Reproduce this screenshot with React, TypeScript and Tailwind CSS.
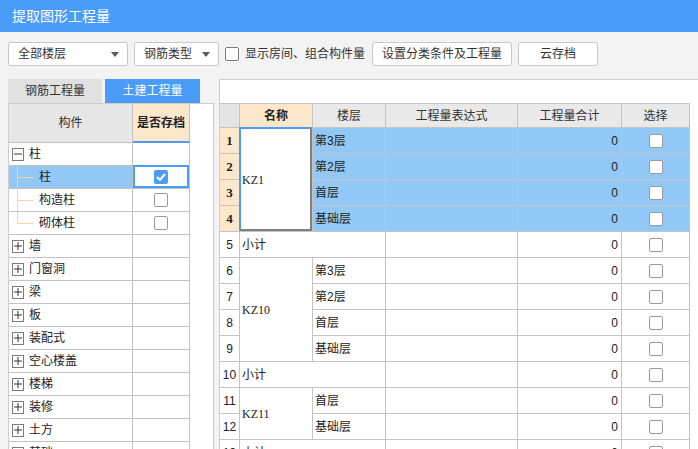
import React from 'react';

type TreeRow = {
  label: string;
  kind: 'parent' | 'child';
  open?: boolean;
  checked?: boolean;
  selected?: boolean;
  last?: boolean;
};

const treeRows: TreeRow[] = [
  { label: '柱', kind: 'parent', open: true },
  { label: '柱', kind: 'child', checked: true, selected: true },
  { label: '构造柱', kind: 'child' },
  { label: '砌体柱', kind: 'child', last: true },
  { label: '墙', kind: 'parent' },
  { label: '门窗洞', kind: 'parent' },
  { label: '梁', kind: 'parent' },
  { label: '板', kind: 'parent' },
  { label: '装配式', kind: 'parent' },
  { label: '空心楼盖', kind: 'parent' },
  { label: '楼梯', kind: 'parent' },
  { label: '装修', kind: 'parent' },
  { label: '土方', kind: 'parent' },
  { label: '基础', kind: 'parent' },
];

type Group = { name: string; floors: string[]; hot?: boolean };

const groups: Group[] = [
  { name: 'KZ1', floors: ['第3层', '第2层', '首层', '基础层'], hot: true },
  { name: 'KZ10', floors: ['第3层', '第2层', '首层', '基础层'] },
  { name: 'KZ11', floors: ['首层', '基础层'] },
];

const Caret = () => (
  <svg width="8" height="5" viewBox="0 0 8 5" className="shrink-0">
    <path d="M0 0 L8 0 L4 5 Z" fill="#5a5a5a" />
  </svg>
);

const Box = ({ checked }: { checked?: boolean }) =>
  checked ? (
    <div className="w-[14px] h-[14px] rounded-[2px] bg-[#4a9cf8] flex items-center justify-center">
      <svg width="10" height="8" viewBox="0 0 10 8">
        <path d="M1 4 L4 7 L9 1" stroke="#fff" strokeWidth="2" fill="none" />
      </svg>
    </div>
  ) : (
    <div className="w-[14px] h-[14px] rounded-[2px] border border-[#9a9a9a] bg-white" />
  );

const Expander = ({ open }: { open?: boolean }) => (
  <div className="ml-[3px] w-[12px] h-[13px] border border-[#7a7a7a] bg-white flex items-center justify-center shrink-0">
    <svg width="8" height="8" viewBox="0 0 8 8">
      <path d="M0 4 H8" stroke="#333" strokeWidth="1" />
      {!open && <path d="M4 0 V8" stroke="#333" strokeWidth="1" />}
    </svg>
  </div>
);

const TreeGrid = () => (
  <div className="grid grid-cols-[124px_57px] grid-rows-[39px] auto-rows-[23px] w-[181px] text-[12px] text-[#222]">
    <div className="bg-[#e6e6e6] border-r border-b border-[#c2c2c2] flex items-center justify-center text-[#333]">
      构件
    </div>
    <div className="bg-[#fde7cb] border-r border-b-2 border-r-[#c2c2c2] border-b-[#4a9cf8] flex items-center justify-center font-bold">
      是否存档
    </div>
    {treeRows.map((r, i) => (
      <React.Fragment key={i}>
        <div
          className={
            'border-r border-b border-[#c2c2c2] flex items-center ' +
            (r.selected ? 'bg-[#91c8f6]' : 'bg-white')
          }
        >
          {r.kind === 'parent' ? (
            <>
              <Expander open={r.open} />
              <span className="ml-[5px]">{r.label}</span>
            </>
          ) : (
            <>
              <svg width="24" height="22" viewBox="0 0 24 22" className="shrink-0 self-start">
                <path d={r.last ? 'M8.5 0 V11.5' : 'M8.5 0 V22'} stroke="#fcd29f" strokeWidth="1" />
                <path d="M8.5 11.5 H24" stroke="#fcd29f" strokeWidth="1" />
              </svg>
              <span className="ml-[6px]">{r.label}</span>
            </>
          )}
        </div>
        <div className="relative border-r border-b border-[#c2c2c2] bg-white flex items-center justify-center">
          {r.kind === 'child' && <Box checked={r.checked} />}
          {r.selected && (
            <div className="absolute -top-px left-0 right-0 bottom-0 border-2 border-[#4a9cf8]" />
          )}
        </div>
      </React.Fragment>
    ))}
  </div>
);

const cell = 'border-r border-b border-[#c4c4c4] flex items-center';

const QtyGrid = () => {
  let n = 0;
  const rows: React.ReactNode[] = [];
  groups.forEach((g, gi) => {
    g.floors.forEach((f, fi) => {
      n += 1;
      const hot = !!g.hot;
      rows.push(
        <React.Fragment key={`r${n}`}>
          <div
            className={
              cell +
              ' justify-center ' +
              (hot
                ? "bg-[#fde7cb] font-bold font-['Liberation_Serif',serif] text-[13px]"
                : 'bg-white')
            }
          >
            {n}
          </div>
          {fi === 0 && (
            <div
              className={
                cell +
                " relative bg-white pl-[2px] font-['Liberation_Serif',serif] " +
                (g.floors.length === 4 ? 'row-span-4' : 'row-span-2')
              }
            >
              {g.name}
              {hot && (
                <div className="absolute -left-px -top-px right-0 bottom-0 border-l-2 border-t-2 border-r-2 border-b-2 border-l-[#4a9cf8] border-t-[#4a9cf8] border-r-[#7f7f7f] border-b-[#7f7f7f]" />
              )}
            </div>
          )}
          <div className={cell + ' pl-[2px] ' + (hot ? 'bg-[#91c8f6]' : 'bg-white')}>{f}</div>
          <div className={cell + ' ' + (hot ? 'bg-[#91c8f6]' : 'bg-white')} />
          <div className={cell + ' justify-end pr-[3px] ' + (hot ? 'bg-[#91c8f6]' : 'bg-white')}>0</div>
          <div className={cell + ' justify-center ' + (hot ? 'bg-[#91c8f6]' : 'bg-white')}>
            <Box />
          </div>
        </React.Fragment>
      );
    });
    n += 1;
    rows.push(
      <React.Fragment key={`s${gi}`}>
        <div className={cell + ' justify-center bg-white'}>{n}</div>
        <div className={cell + ' col-span-2 pl-[2px] bg-white'}>小计</div>
        <div className={cell + ' bg-white'} />
        <div className={cell + ' justify-end pr-[3px] bg-white'}>0</div>
        <div className={cell + ' justify-center bg-white'}>
          <Box />
        </div>
      </React.Fragment>
    );
  });

  return (
    <div className="grid grid-cols-[20px_73px_73px_132px_104px_68px] grid-rows-[24px] auto-rows-[26px] w-[470px] border-t border-[#c4c4c4] text-[12px] text-[#222]">
      <div className={cell + ' bg-[#e4e4e4]'} />
      <div className={cell + ' justify-center bg-[#fde7cb] font-bold'}>名称</div>
      <div className={cell + ' justify-center bg-[#e9e9e9] text-[#333]'}>楼层</div>
      <div className={cell + ' justify-center bg-[#e9e9e9] text-[#333]'}>工程量表达式</div>
      <div className={cell + ' justify-center bg-[#e9e9e9] text-[#333]'}>工程量合计</div>
      <div className={cell + ' justify-center bg-[#e9e9e9] text-[#333]'}>选择</div>
      {rows}
    </div>
  );
};

export default function App() {
  return (
    <div className="w-[698px] h-[449px] overflow-hidden bg-[#f3f3f3] flex flex-col font-['Liberation_Sans','Noto_Sans_CJK_SC',sans-serif] text-[#333]">
      {/* Title */}
      <div className="h-[32px] shrink-0 bg-[#4a9cf8] flex items-center pl-[12px] text-white text-[14px]">
        提取图形工程量
      </div>

      {/* Toolbar */}
      <div className="h-[47px] shrink-0 flex items-start pt-[10px] pl-[8px] text-[12px]">
        <div className="w-[120px] h-[24px] bg-white border border-[#c8c8c8] rounded-[2px] flex items-center justify-between pl-[9px] pr-[8px]">
          <span>全部楼层</span>
          <Caret />
        </div>
        <div className="ml-[6px] w-[85px] h-[24px] bg-white border border-[#c8c8c8] rounded-[2px] flex items-center justify-between pl-[9px] pr-[8px]">
          <span>钢筋类型</span>
          <Caret />
        </div>
        <div className="ml-[6px] mt-[5px] w-[14px] h-[14px] rounded-[2px] border border-[#7a7a7a] bg-white" />
        <div className="ml-[6px] h-[24px] flex items-center">显示房间、组合构件量</div>
        <div className="ml-[7px] w-[140px] h-[24px] bg-white border border-[#c8c8c8] rounded-[3px] flex items-center justify-center">
          设置分类条件及工程量
        </div>
        <div className="ml-[6px] w-[80px] h-[24px] bg-white border border-[#c8c8c8] rounded-[3px] flex items-center justify-center">
          云存档
        </div>
      </div>

      {/* Body */}
      <div className="flex-1 flex min-h-0">
        {/* Left panel */}
        <div className="ml-[8px] w-[206px] shrink-0 flex flex-col">
          <div className="h-[24px] flex text-[12px]">
            <div className="w-[94px] bg-[#e1e1e1] flex items-center justify-center text-[#333]">钢筋工程量</div>
            <div className="ml-[3px] w-[95px] bg-[#4a9cf8] flex items-center justify-center text-white">土建工程量</div>
          </div>
          <div className="flex-1 bg-white border-l border-r border-t border-[#cdcdcd] overflow-hidden">
            <TreeGrid />
          </div>
        </div>

        {/* Right panel */}
        <div className="ml-[5px] flex-1 bg-white border-l border-t border-[#cfcfcf] flex flex-col overflow-hidden">
          <div className="h-[23px] shrink-0" />
          <QtyGrid />
        </div>
      </div>
    </div>
  );
}
